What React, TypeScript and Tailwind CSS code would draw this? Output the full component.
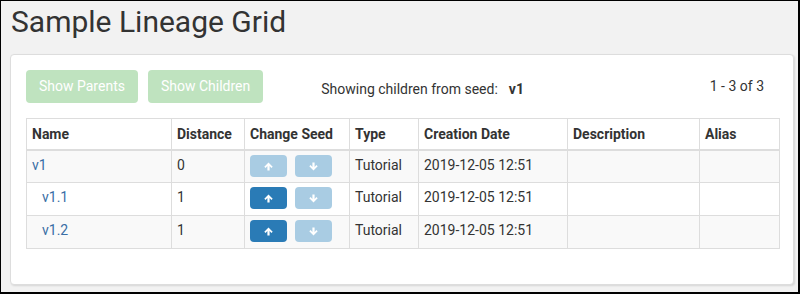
import React from "react";

function ArrowUp() {
  return (
    <svg width="9" height="9" viewBox="0 0 9 9" fill="white">
      <path d="M4.5 0.5 L8.7 4.7 L7.4 5.9 L5.6 4.1 L5.6 8.6 L3.4 8.6 L3.4 4.1 L1.6 5.9 L0.3 4.7 Z" />
    </svg>
  );
}

function ArrowDown() {
  return (
    <svg width="9" height="9" viewBox="0 0 9 9" fill="white">
      <path d="M4.5 8.5 L8.7 4.3 L7.4 3.1 L5.6 4.9 L5.6 0.4 L3.4 0.4 L3.4 4.9 L1.6 3.1 L0.3 4.3 Z" />
    </svg>
  );
}

const rows = [
  { name: "v1", indent: false, dist: "0", upActive: false, pb: "pb-[7px]", bpb: "pb-[5px]" },
  { name: "v1.1", indent: true, dist: "1", upActive: true, pb: "pb-[8px]", bpb: "pb-[6px]" },
  { name: "v1.2", indent: true, dist: "1", upActive: true, pb: "pb-[8px]", bpb: "pb-[6px]" },
];

const cols = [
  { label: "Name", w: 145 },
  { label: "Distance", w: 73 },
  { label: "Change Seed", w: 105 },
  { label: "Type", w: 69 },
  { label: "Creation Date", w: 149 },
  { label: "Description", w: 132 },
  { label: "Alias", w: 80 },
];

export default function App() {
  return (
    <div
      className="w-[800px] h-[294px] bg-[#f2f2f2] border-l border-t border-r-2 border-b-2 border-black flex flex-col text-[#333]"
      style={{ fontFamily: "Roboto, 'Liberation Sans', sans-serif" }}
    >
      <h1 className="text-[30px] leading-[36px] pl-[10px] pt-[3px] text-[#333] font-normal">
        Sample Lineage Grid
      </h1>
      <div className="ml-[9px] mr-[4px] mt-[14px] h-[231px] bg-white border border-[#ddd] rounded-[4px] shadow-[1px_1px_2px_rgba(0,0,0,0.12)] px-[15px] pt-[15px]">
        <div className="flex items-start h-[48px]">
          <button className="h-[33px] px-[13px] rounded-[4px] bg-[#bfe3bf] text-white text-[14px]">
            Show Parents
          </button>
          <button className="ml-[10px] h-[33px] px-[13px] rounded-[4px] bg-[#bfe3bf] text-white text-[14px]">
            Show Children
          </button>
          <div className="ml-[58px] mt-[9px] text-[14px] leading-[20px] text-[#333]">
            Showing children from seed:<span className="font-bold ml-[11px]">v1</span>
          </div>
          <div className="ml-auto mr-[14px] mt-[6px] text-[14px] leading-[20px] text-[#333]">
            1 - 3 of 3
          </div>
        </div>
        <table className="border-collapse table-fixed w-[753px] text-[14px] leading-[20px]">
          <colgroup>
            {cols.map((c) => (
              <col key={c.label} style={{ width: c.w }} />
            ))}
          </colgroup>
          <thead>
            <tr>
              {cols.map((c) => (
                <th
                  key={c.label}
                  className="border border-[#ddd] border-b-2 text-left font-bold px-[5px] py-[5px] text-[#333]"
                >
                  {c.label}
                </th>
              ))}
            </tr>
          </thead>
          <tbody>
            {rows.map((r, i) => (
              <tr key={r.name} className={i % 2 === 0 ? "bg-[#f9f9f9]" : "bg-white"}>
                <td className={`border border-[#ddd] px-[5px] pt-[4px] ${r.pb}`}>
                  <a className={`text-[#3a6ea5] ${r.indent ? "pl-[10px]" : ""}`}>{r.name}</a>
                </td>
                <td className={`border border-[#ddd] px-[5px] pt-[4px] ${r.pb}`}>{r.dist}</td>
                <td className={`border border-[#ddd] px-[5px] pt-[4px] ${r.bpb}`}>
                  <div className="flex gap-[8px]">
                    <span
                      className={`w-[37px] h-[22px] rounded-[4px] flex items-center justify-center ${
                        r.upActive ? "bg-[#2a7bb6]" : "bg-[#a9cce3]"
                      }`}
                    >
                      <ArrowUp />
                    </span>
                    <span className="w-[37px] h-[22px] rounded-[4px] flex items-center justify-center bg-[#a9cce3]">
                      <ArrowDown />
                    </span>
                  </div>
                </td>
                <td className={`border border-[#ddd] px-[5px] pt-[4px] ${r.pb}`}>Tutorial</td>
                <td className={`border border-[#ddd] px-[5px] pt-[4px] ${r.pb}`}>2019-12-05 12:51</td>
                <td className={`border border-[#ddd] px-[5px] pt-[4px] ${r.pb}`}></td>
                <td className={`border border-[#ddd] px-[5px] pt-[4px] ${r.pb}`}></td>
              </tr>
            ))}
          </tbody>
        </table>
      </div>
    </div>
  );
}
